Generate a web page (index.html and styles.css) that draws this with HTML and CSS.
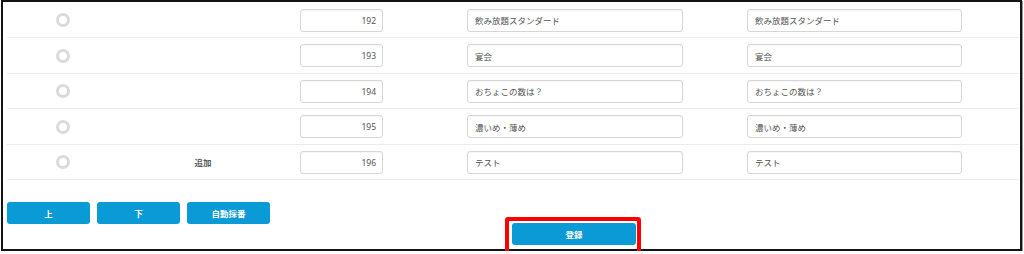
FILE: index.html
```html
<!DOCTYPE html>
<html lang="ja">
<head>
<meta charset="utf-8">
<title>設問並べ替え</title>
<link rel="stylesheet" href="styles.css">
</head>
<body>
<div class="frame">
  <div class="inner">
    <div class="table">
      <div class="row">
        <span class="radio"></span><span class="label"></span>
        <input class="num" type="text" value="192"><span></span>
        <input class="txt" type="text" value="飲み放題スタンダード"><span></span>
        <input class="txt" type="text" value="飲み放題スタンダード">
      </div>
      <div class="row">
        <span class="radio"></span><span class="label"></span>
        <input class="num" type="text" value="193"><span></span>
        <input class="txt" type="text" value="宴会"><span></span>
        <input class="txt" type="text" value="宴会">
      </div>
      <div class="row">
        <span class="radio"></span><span class="label"></span>
        <input class="num" type="text" value="194"><span></span>
        <input class="txt" type="text" value="おちょこの数は？"><span></span>
        <input class="txt" type="text" value="おちょこの数は？">
      </div>
      <div class="row">
        <span class="radio"></span><span class="label"></span>
        <input class="num" type="text" value="195"><span></span>
        <input class="txt" type="text" value="濃いめ・薄め"><span></span>
        <input class="txt" type="text" value="濃いめ・薄め">
      </div>
      <div class="row">
        <span class="radio"></span><span class="label">追加</span>
        <input class="num" type="text" value="196"><span></span>
        <input class="txt" type="text" value="テスト"><span></span>
        <input class="txt" type="text" value="テスト">
      </div>
    </div>
    <div class="actions">
      <button class="btn" type="button">上</button>
      <button class="btn" type="button">下</button>
      <button class="btn" type="button">自動採番</button>
    </div>
    <div class="submit-row">
      <button class="btn btn-submit" type="button">登録</button>
    </div>
  </div>
  <div class="highlight"></div>
</div>
</body>
</html>
```
FILE: styles.css
```css
html, body {
  margin: 0;
  padding: 0;
  background: #fff;
}

body {
  font-family: "Noto Sans", "Noto Sans CJK JP", sans-serif;
  overflow: hidden;
}

.frame {
  position: relative;
  box-sizing: border-box;
  margin-left: 1px;
  width: 1021px;
  height: 251px;
  border: 2px solid #141414;
  box-shadow: 1px 1px 0 #9a9a9a;
  background: #fff;
}

.inner {
  padding: 0.5px 1px 0 4px;
}

.row {
  box-sizing: border-box;
  height: 35.5px;
  border-bottom: 1px solid #ececec;
  display: grid;
  grid-template-columns: 112px 181px 83px 84px 216px 64px 215px 1fr;
  align-items: center;
}

.radio {
  justify-self: center;
  box-sizing: border-box;
  width: 14px;
  height: 14px;
  border-radius: 50%;
  border: 3px solid #dadada;
  margin-top: 1px;
}

.label {
  justify-self: center;
  padding-right: 13px;
  font-family: "Noto Sans CJK JP", sans-serif;
  font-size: 8.5px;
  font-weight: 700;
  color: #5a5a5a;
}

input {
  box-sizing: border-box;
  height: 23px;
  margin: 1px 0 0;
  border: 1px solid #d6d6d6;
  border-radius: 3px;
  background: #fff;
  color: #555;
  font-size: 8.5px;
  box-shadow: inset 0 1px 1px rgba(0, 0, 0, 0.04);
  outline: none;
}

.num {
  width: 83px;
  text-align: right;
  padding: 0 6px 0 4px;
  font-family: "Noto Sans", sans-serif;
}

.txt {
  width: 100%;
  padding: 0 6px 0 7px;
  font-family: "Noto Sans CJK JP", sans-serif;
}

.actions {
  display: flex;
  gap: 7px;
  margin-top: 21.5px;
}

.btn {
  box-sizing: border-box;
  width: 83px;
  height: 22px;
  border: 0;
  border-radius: 3px;
  background: #0a9ad6;
  color: #fff;
  font-family: "Noto Sans CJK JP", sans-serif;
  font-size: 8.5px;
  font-weight: 700;
  padding: 0;
}

.submit-row {
  display: flex;
  margin-top: -1px;
  padding-left: 505px;
}

.btn-submit {
  width: 124px;
}

.highlight {
  position: absolute;
  left: 502px;
  top: 215px;
  box-sizing: border-box;
  width: 136px;
  height: 42px;
  border: 4px solid #ff0000;
  border-radius: 3px;
  z-index: 2;
}
```
